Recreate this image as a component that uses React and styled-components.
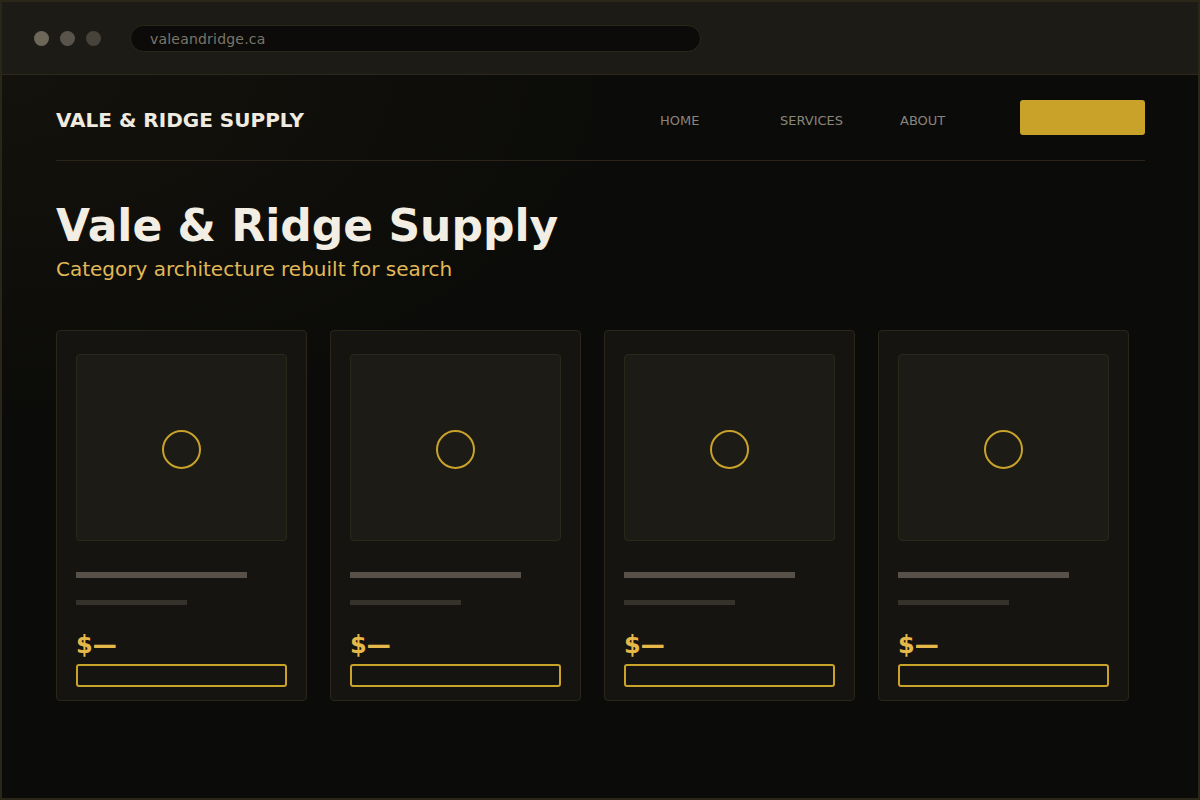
import React from "react";
import styled, { createGlobalStyle } from "styled-components";

const Global = createGlobalStyle`
  * { box-sizing: border-box; }
  html, body { margin: 0; padding: 0; background: #0b0b09; }
  body { font-family: "DejaVu Sans", Verdana, sans-serif; }
`;

const Frame = styled.div`
  width: 1200px;
  height: 800px;
  border: 2px solid #2a2719;
  background: #0b0b09;
  display: flex;
  flex-direction: column;
  overflow: hidden;
`;

const BrowserBar = styled.div`
  height: 73px;
  flex: none;
  background: #1c1b16;
  border-bottom: 1px solid #2c291b;
  display: flex;
  align-items: center;
  padding-left: 32px;
`;

const Dots = styled.div`
  display: flex;
  gap: 11px;
  margin-right: 29px;
`;

const Dot = styled.span`
  width: 15px;
  height: 15px;
  border-radius: 50%;
  background: ${(p) => p.$c};
`;

const Url = styled.div`
  width: 571px;
  height: 27px;
  border-radius: 14px;
  background: #0c0b09;
  border: 1px solid #2a2819;
  display: flex;
  align-items: center;
  padding-left: 19px;
  padding-top: 1px;
  font-size: 14px;
  color: #7a756a;
  letter-spacing: 0.2px;
`;

const Main = styled.main`
  flex: 1;
  padding: 0 53px 0 54px;
  background: radial-gradient(ellipse 900px 500px at 0% 0%, rgba(60, 50, 25, 0.18), rgba(11, 11, 9, 0) 70%), #0b0b09;
`;

const Header = styled.header`
  display: flex;
  align-items: center;
  padding: 25px 0 25px;
  border-bottom: 1px solid #2a2518;
`;

const Logo = styled.div`
  font-size: 20px;
  font-weight: 700;
  color: #f0ebe0;
  flex: 1;
  padding-top: 4px;
`;

const Nav = styled.nav`
  display: flex;
  align-items: center;
`;

const NavItem = styled.a`
  width: 120px;
  font-size: 13px;
  color: #8a857a;
  text-decoration: none;
  padding-top: 6px;
`;

const CtaButton = styled.button`
  width: 125px;
  height: 35px;
  border: none;
  border-radius: 3px;
  background: #c9a22a;
`;

const Hero = styled.section`
  padding-top: 38px;
`;

const Title = styled.h1`
  margin: 0;
  font-size: 44px;
  line-height: 54px;
  font-weight: 700;
  color: #f3eee3;
`;

const Subtitle = styled.p`
  margin: 3px 0 0;
  font-size: 20px;
  line-height: 27px;
  color: #e2b957;
`;

const Grid = styled.div`
  display: grid;
  grid-template-columns: repeat(4, 251px);
  gap: 23px;
  margin-top: 47px;
`;

const Card = styled.div`
  height: 371px;
  background: #151410;
  border: 1px solid #2a2718;
  border-radius: 4px;
  padding: 23px 19px 0;
  display: flex;
  flex-direction: column;
`;

const Thumb = styled.div`
  height: 187px;
  background: #1c1b16;
  border: 1px solid #2a2819;
  border-radius: 4px;
  display: flex;
  align-items: center;
  justify-content: center;
  padding-top: 4px;
`;

const Ring = styled.div`
  width: 39px;
  height: 39px;
  border-radius: 50%;
  border: 2px solid #c9a22a;
`;

const Bar = styled.div`
  width: ${(p) => p.$w}px;
  height: ${(p) => p.$h}px;
  background: ${(p) => p.$c};
  margin-top: ${(p) => p.$mt}px;
`;

const Price = styled.div`
  margin-top: 26px;
  font-size: 24px;
  line-height: 28px;
  font-weight: 700;
  color: #e6b84a;
`;

const OutlineButton = styled.button`
  margin-top: 5px;
  height: 23px;
  width: 100%;
  background: transparent;
  border: 2px solid #c9a22a;
  border-radius: 3px;
`;

const cards = [0, 1, 2, 3];

export default function App() {
  return (
    <>
      <Global />
      <Frame>
        <BrowserBar>
          <Dots>
            <Dot $c="#6d675a" />
            <Dot $c="#59544b" />
            <Dot $c="#47433b" />
          </Dots>
          <Url>valeandridge.ca</Url>
        </BrowserBar>
        <Main>
          <Header>
            <Logo>VALE &amp; RIDGE SUPPLY</Logo>
            <Nav>
              <NavItem>HOME</NavItem>
              <NavItem>SERVICES</NavItem>
              <NavItem>ABOUT</NavItem>
              <CtaButton aria-label="Contact" />
            </Nav>
          </Header>
          <Hero>
            <Title>Vale &amp; Ridge Supply</Title>
            <Subtitle>Category architecture rebuilt for search</Subtitle>
          </Hero>
          <Grid>
            {cards.map((i) => (
              <Card key={i}>
                <Thumb>
                  <Ring />
                </Thumb>
                <Bar $w={171} $h={6} $c="#57514a" $mt={31} />
                <Bar $w={111} $h={5} $c="#34322b" $mt={22} />
                <Price>$—</Price>
                <OutlineButton aria-label="Add" />
              </Card>
            ))}
          </Grid>
        </Main>
      </Frame>
    </>
  );
}
